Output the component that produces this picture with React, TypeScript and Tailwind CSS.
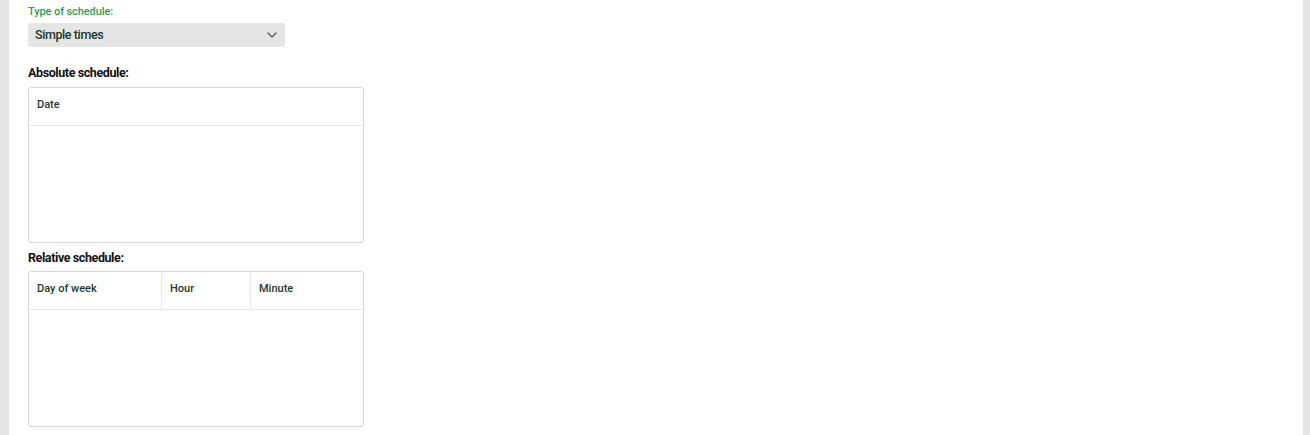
import React from "react";

const font = { fontFamily: "Roboto, 'Liberation Sans', sans-serif" };

export default function App() {
  return (
    <div className="min-h-[435px] w-full bg-[#e6e6e6] flex" style={font}>
      <div className="ml-[9px] w-[1294px] min-h-[435px] bg-white px-[19px] pt-[5px] flex flex-col">
        <div className="text-[11px] leading-[14px] font-medium tracking-[-0.1px] text-[#1fa34f]">Type of schedule:</div>
        <div className="mt-[4px] h-[24px] w-[257px] rounded-[3px] bg-[#e5e5e5] flex items-center justify-between pl-[7px] pr-[8px]">
          <span className="text-[12.5px] font-medium tracking-[-0.4px] text-[#1e3a2c]">Simple times</span>
          <svg width="10" height="6" viewBox="0 0 10 6" fill="none">
            <path d="M1 1l4 4 4-4" stroke="#555" strokeWidth="1.2" strokeLinecap="round" strokeLinejoin="round" />
          </svg>
        </div>

        <div className="mt-[17px] text-[12.5px] leading-[18px] font-bold tracking-[-0.4px] text-[#111]">Absolute schedule:</div>
        <div className="mt-[5px] w-[336px] h-[156px] border border-[#d6d6d6] rounded-[3px] flex flex-col">
          <div className="h-[38px] border-b border-[#e6e6e6] flex items-center pl-[8px] pb-[2px]">
            <span className="text-[11px] font-medium text-[#1e3a2c]">Date</span>
          </div>
          <div className="flex-1" />
        </div>

        <div className="mt-[6px] text-[12.5px] leading-[18px] font-bold tracking-[-0.4px] text-[#111]">Relative schedule:</div>
        <div className="mt-[4px] w-[336px] h-[156px] border border-[#d6d6d6] rounded-[3px] flex flex-col">
          <div className="h-[38px] border-b border-[#e6e6e6] flex">
            <div className="w-[133px] border-r border-[#e6e6e6] flex items-center pl-[8px] pb-[2px]">
              <span className="text-[11px] font-medium text-[#1e3a2c]">Day of week</span>
            </div>
            <div className="w-[89px] border-r border-[#e6e6e6] flex items-center pl-[8px] pb-[2px]">
              <span className="text-[11px] font-medium text-[#1e3a2c]">Hour</span>
            </div>
            <div className="flex-1 flex items-center pl-[8px] pb-[2px]">
              <span className="text-[11px] font-medium text-[#1e3a2c]">Minute</span>
            </div>
          </div>
          <div className="flex-1" />
        </div>
      </div>
    </div>
  );
}
